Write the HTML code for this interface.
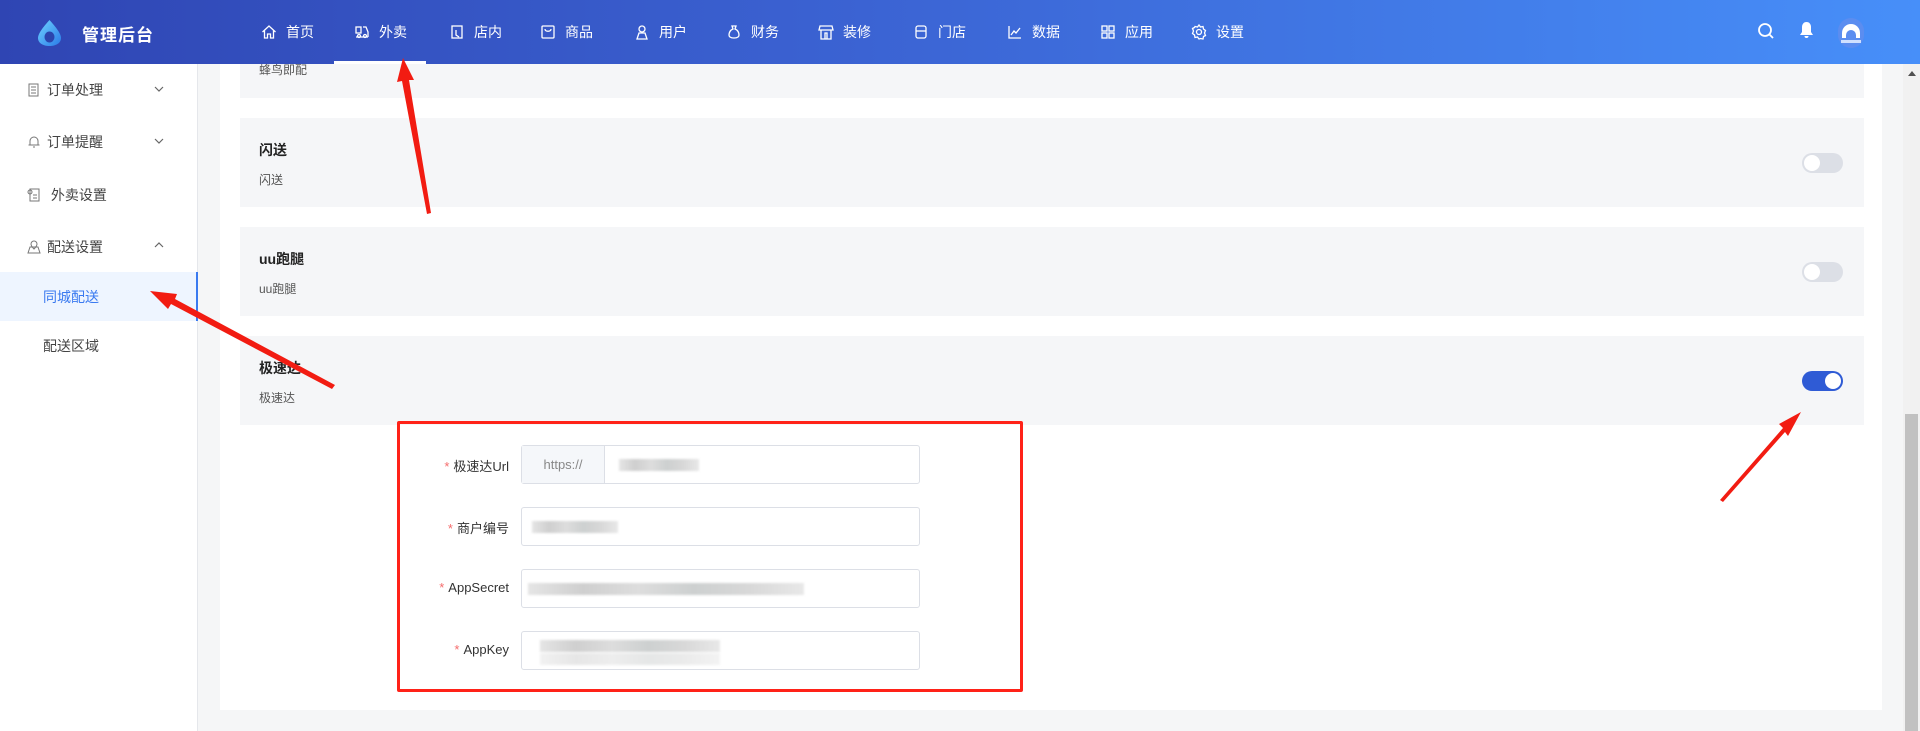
<!DOCTYPE html>
<html><head><meta charset="utf-8"><style>
*{margin:0;padding:0;box-sizing:border-box}
body{width:1920px;height:731px;overflow:hidden;background:#f5f6f7;font-family:"Liberation Sans","Noto Sans CJK SC",sans-serif;position:relative;color:#333}
.hdr{position:absolute;left:0;top:0;width:1920px;height:64px;background:linear-gradient(90deg,#2f45b3 0%,#3b63d3 45%,#478ff9 100%);z-index:5}
.logo{position:absolute;left:82px;top:21px;color:#fff;font-size:17px;font-weight:bold;letter-spacing:1px}
.nav{position:absolute;top:22px;color:#fff;font-size:14px;display:flex;align-items:center;gap:9px;height:20px}
.nav svg{width:16px;height:16px}
.side{position:absolute;left:0;top:64px;width:198px;height:667px;background:#fff;border-right:1px solid #e5e7eb}
.si{position:absolute;left:27px;font-size:14px;color:#444;display:flex;align-items:center;gap:6px}
.chev{position:absolute;left:154px}
.card{position:absolute;left:220px;top:0;width:1662px;height:710px;background:#fff}
.row{position:absolute;left:240px;width:1624px;background:#f5f6f8}
.t{position:absolute;left:19px;font-size:14px;font-weight:bold;color:#222}
.s{position:absolute;left:19px;font-size:12px;color:#555}
.tg{position:absolute;left:1562px;width:41px;height:20px;border-radius:10px;background:#dcdfe6}
.tg:after{content:"";position:absolute;left:2px;top:2px;width:16px;height:16px;border-radius:50%;background:#fff}
.tg.on{background:#2f5bd5}.tg.on:after{left:23px}
.lb{position:absolute;width:120px;left:389px;text-align:right;font-size:13px;color:#333}
.lb i{color:#f56c6c;font-style:normal;margin-right:4px}
.in{position:absolute;left:521px;width:399px;height:39px;border:1px solid #dcdfe6;border-radius:3px;background:#fff}
.blur{position:absolute;height:12px;background:linear-gradient(90deg,#e5e5e5,#cfcfcf,#ddd,#cdd0d0,#d8d8d8,#e8e8e8);filter:blur(1px)}
</style></head><body>
<div class="hdr">
 <svg style="position:absolute;left:36px;top:19px" width="27" height="28" viewBox="0 0 27 28"><defs><linearGradient id="g" x1="0" y1="0" x2="1" y2="1"><stop offset="0" stop-color="#6fd3ff"/><stop offset="1" stop-color="#2a7be8"/></linearGradient></defs><path d="M13.5 1C9 6 2 14 2 19c0 5 5 8 11.5 8S25 24 25 19C25 14 18 6 13.5 1Z" fill="url(#g)"/><ellipse cx="13.5" cy="18" rx="5" ry="5.5" fill="#2b45ae"/></svg>
 <div class="logo">管理后台</div>
 <div class="nav" style="left:261px"><svg viewBox="0 0 16 16" fill="none" stroke="#fff" stroke-width="1.3"><path d="M1.5 8 8 2l6.5 6M3.5 6.5V14h3v-4h3v4h3V6.5"/></svg>首页</div>
 <div class="nav" style="left:354px"><svg viewBox="0 0 16 16" fill="none" stroke="#fff" stroke-width="1.3"><rect x="2" y="3" width="5" height="6"/><path d="M9 3h3l2 5v5M2 13h12"/><circle cx="5" cy="12" r="1.5"/><circle cx="11" cy="12" r="1.5"/></svg>外卖</div>
 <div style="position:absolute;left:334px;top:61px;width:92px;height:3px;background:#fff"></div>
 <div class="nav" style="left:449px"><svg viewBox="0 0 16 16" fill="none" stroke="#fff" stroke-width="1.3"><rect x="3" y="2" width="10" height="12"/><path d="M7 6v5l3 2"/></svg>店内</div>
 <div class="nav" style="left:540px"><svg viewBox="0 0 16 16" fill="none" stroke="#fff" stroke-width="1.3"><rect x="2" y="2" width="12" height="12" rx="1"/><path d="M5 5c0 3 6 3 6 0"/></svg>商品</div>
 <div class="nav" style="left:634px"><svg viewBox="0 0 16 16" fill="none" stroke="#fff" stroke-width="1.3"><circle cx="8" cy="5" r="3"/><path d="M3 15l2-6h6l2 6z"/></svg>用户</div>
 <div class="nav" style="left:726px"><svg viewBox="0 0 16 16" fill="none" stroke="#fff" stroke-width="1.3"><path d="M6 2h4l-1 3c3 1 4 4 4 6 0 2-2 3-5 3s-5-1-5-3c0-2 1-5 4-6z"/></svg>财务</div>
 <div class="nav" style="left:818px"><svg viewBox="0 0 16 16" fill="none" stroke="#fff" stroke-width="1.3"><path d="M1 6h14M2 2h12l1 4H1zM3 6v9h10V6M7 15V9h2v6"/></svg>装修</div>
 <div class="nav" style="left:913px"><svg viewBox="0 0 16 16" fill="none" stroke="#fff" stroke-width="1.3"><rect x="3" y="2" width="10" height="12" rx="2"/><path d="M3 7h10"/></svg>门店</div>
 <div class="nav" style="left:1007px"><svg viewBox="0 0 16 16" fill="none" stroke="#fff" stroke-width="1.3"><path d="M2 2v12h12M4 11l3-4 2 2 4-5"/></svg>数据</div>
 <div class="nav" style="left:1100px"><svg viewBox="0 0 16 16" fill="none" stroke="#fff" stroke-width="1.3"><rect x="2" y="2" width="5" height="5"/><rect x="9" y="2" width="5" height="5"/><rect x="2" y="9" width="5" height="5"/><rect x="9" y="9" width="5" height="5"/></svg>应用</div>
 <div class="nav" style="left:1191px"><svg viewBox="0 0 16 16" fill="none" stroke="#fff" stroke-width="1.3"><circle cx="8" cy="8" r="2.5"/><path d="M8 1l1.5 2 2.5-.5.5 2.5 2 1.5-1 2.5 1 2.5-2 1-.5 2.5-2.5-.5L8 15l-1.5-2-2.5.5-.5-2.5-2-1.5 1-2.5-1-2.5 2-1L4 2.5l2.5.5z"/></svg>设置</div>
 <svg style="position:absolute;left:1757px;top:22px" width="18" height="18" viewBox="0 0 18 18" fill="none" stroke="#fff" stroke-width="1.8"><circle cx="8" cy="8" r="6"/><path d="M12.5 12.5 16 16"/></svg>
 <svg style="position:absolute;left:1799px;top:21px" width="15" height="18" viewBox="0 0 15 18" fill="#fff"><path d="M7.5 1C4.5 1 3 3.5 3 6v5l-2 3h13l-2-3V6c0-2.5-1.5-5-4.5-5zM5.5 15h4a2 2 0 0 1-4 0z"/></svg>
 <div style="position:absolute;left:1838px;top:18px;width:26px;height:30px;border-radius:13px;background:#5b8df0;overflow:hidden"><div style="position:absolute;left:4px;top:6px;width:18px;height:14px;border-radius:9px 9px 0 0;background:#fff"></div><div style="position:absolute;left:8px;top:12px;width:10px;height:8px;border-radius:5px 5px 0 0;background:#5b8df0"></div><div style="position:absolute;left:3px;top:22px;width:20px;height:3px;background:#cfe0ff"></div></div>
</div>
<div class="side">
 <div class="si" style="top:16px"><svg width="14" height="14" viewBox="0 0 14 14" fill="none" stroke="#777" stroke-width="1"><rect x="2" y="1" width="9" height="12"/><path d="M4 4h5M4 7h5M4 10h5"/></svg>订单处理</div>
 <svg class="chev" style="top:22px" width="10" height="6" viewBox="0 0 10 6" fill="none" stroke="#666" stroke-width="1.2"><path d="M1 1l4 4 4-4"/></svg>
 <div class="si" style="top:68px"><svg width="14" height="14" viewBox="0 0 14 14" fill="none" stroke="#777" stroke-width="1"><path d="M3 10V6a4 4 0 0 1 8 0v4H3zM1.5 10h11M6 12h2"/></svg>订单提醒</div>
 <svg class="chev" style="top:74px" width="10" height="6" viewBox="0 0 10 6" fill="none" stroke="#666" stroke-width="1.2"><path d="M1 1l4 4 4-4"/></svg>
 <div class="si" style="top:121px"><svg width="14" height="14" viewBox="0 0 14 14" fill="none" stroke="#777" stroke-width="1"><rect x="3" y="1" width="9" height="12"/><circle cx="3" cy="4" r="2"/><path d="M6 7h4M6 10h4"/></svg>&nbsp;外卖设置</div>
 <div class="si" style="top:173px"><svg width="14" height="14" viewBox="0 0 14 14" fill="none" stroke="#777" stroke-width="1"><path d="M1 13l2-6h8l2 6zM7 9C5 7 4 5.5 4 4a3 3 0 0 1 6 0c0 1.5-1 3-3 5z"/></svg>配送设置</div>
 <svg class="chev" style="top:178px" width="10" height="6" viewBox="0 0 10 6" fill="none" stroke="#666" stroke-width="1.2"><path d="M1 5l4-4 4 4"/></svg>
 <div style="position:absolute;left:0;top:208px;width:198px;height:49px;background:#eef5ff;border-right:2px solid #3a7af0"></div>
 <div style="position:absolute;left:43px;top:223px;font-size:14px;color:#3a7af0">同城配送</div>
 <div style="position:absolute;left:43px;top:272px;font-size:14px;color:#444">配送区域</div>
</div>
<div class="card"></div>
<div class="row" style="top:0;height:98px"><div class="s" style="top:61px">蜂鸟即配</div></div>
<div class="row" style="top:118px;height:89px"><div class="t" style="top:22px">闪送</div><div class="s" style="top:53px">闪送</div><div class="tg" style="top:35px"></div></div>
<div class="row" style="top:227px;height:89px"><div class="t" style="top:22px">uu跑腿</div><div class="s" style="top:53px">uu跑腿</div><div class="tg" style="top:35px"></div></div>
<div class="row" style="top:336px;height:89px"><div class="t" style="top:22px">极速达</div><div class="s" style="top:53px">极速达</div><div class="tg on" style="top:35px"></div></div>

<div class="lb" style="top:456px"><i>*</i>极速达Url</div>
<div class="in" style="top:445px"><div style="position:absolute;left:0;top:0;width:83px;height:37px;background:#f5f7fa;border-right:1px solid #dcdfe6;color:#888;font-size:13px;text-align:center;line-height:37px">https://</div><div class="blur" style="left:97px;top:13px;width:80px"></div></div>
<div class="lb" style="top:518px"><i>*</i>商户编号</div>
<div class="in" style="top:507px"><div class="blur" style="left:10px;top:13px;width:86px"></div></div>
<div class="lb" style="top:580px"><i>*</i>AppSecret</div>
<div class="in" style="top:569px"><div class="blur" style="left:6px;top:13px;width:276px"></div></div>
<div class="lb" style="top:642px"><i>*</i>AppKey</div>
<div class="in" style="top:631px"><div class="blur" style="left:18px;top:8px;width:180px"></div><div class="blur" style="left:18px;top:21px;width:180px;opacity:.5"></div></div>

<div style="position:absolute;left:397px;top:421px;width:626px;height:271px;border:3px solid #ff2218;border-radius:2px"></div>

<div style="position:absolute;left:1903px;top:64px;width:17px;height:667px;background:#f1f1f1"><div style="position:absolute;left:2px;top:350px;width:13px;height:317px;background:#c1c1c1"></div><div style="position:absolute;left:5px;top:7px;border:4px solid transparent;border-bottom:5px solid #505050;border-top:0"></div></div>

<svg style="position:absolute;left:0;top:0;z-index:6" width="1920" height="731">
 <g fill="#f21c12">
  <polygon points="427,214 431,213 409,80 414,80 403,58 397,82 402,81"/>
  <polygon points="332,389 335,385 175,299 177,294 150,291 168,309 171,304"/>
  <polygon points="1720,500 1723,502 1785,432 1788,436 1801,412 1779,424 1783,428"/>
 </g>
</svg>
</body></html>
